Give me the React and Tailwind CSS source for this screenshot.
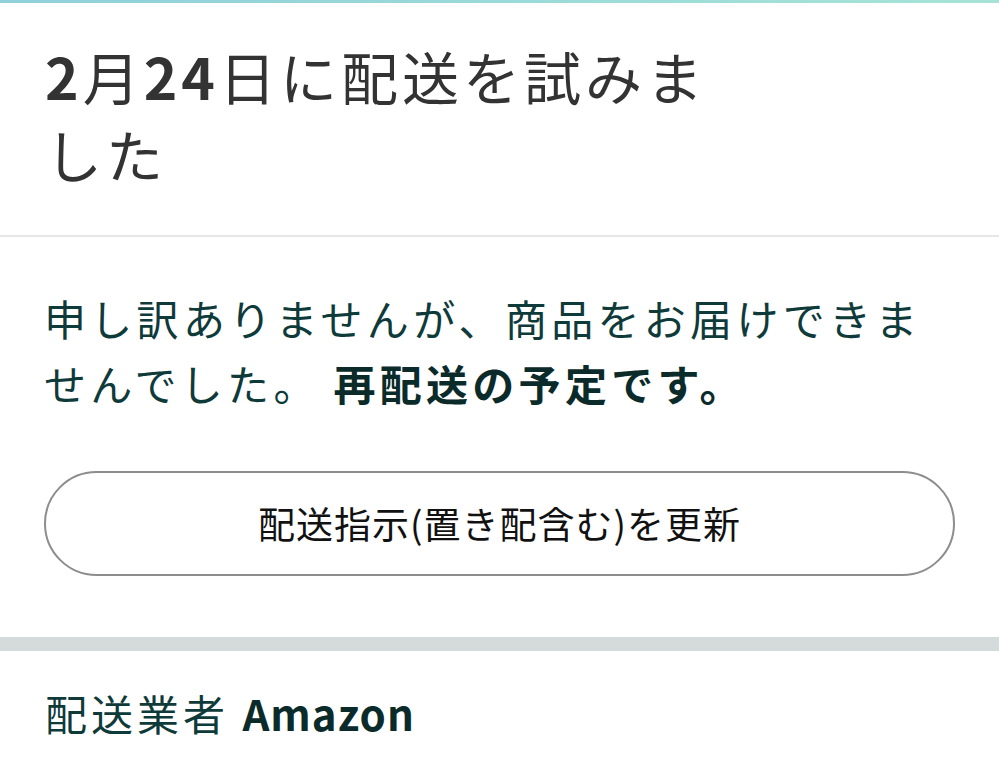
import React from 'react'

const JP = { fontFamily: '"Noto Sans CJK JP", "Noto Sans", sans-serif' }

const App = () => {
  return (
    <div className="w-[999px] h-[764px] overflow-hidden bg-white" style={JP}>
      <div className="h-[3px] bg-gradient-to-r from-[#8fd0da] to-[#a6e3d6]" />

      {/* heading */}
      <div className="h-[234px] flex border-b-2 border-[#e7e7e7]">
        <h1 className="pl-[45px] pt-[33px] text-[57px] leading-[78px] tracking-[4px] text-[#333333] font-normal whitespace-nowrap">
          <span className="font-bold">2</span>月<span className="font-bold">24</span>日に配送を試みま
          <br />
          した
        </h1>
      </div>

      {/* message */}
      <div className="px-[44px] pt-[48px]">
        <p className="text-[42px] leading-[65px] tracking-[4.3px] text-[#0f3a3a] whitespace-nowrap">
          申し訳ありませんが、商品をお届けできま
          <br />
          せんでした。 <span className="font-bold text-[#0b2b2b]">再配送の予定です。</span>
        </p>

        <button className="mt-[56px] w-[911px] h-[105px] rounded-full border-2 border-[#8d8d8d] flex items-center justify-center text-[37px] text-[#111111] tracking-[1px]">
          配送指示(置き配含む)を更新
        </button>
      </div>

      <div className="mt-[61px] h-[14px] bg-[#d5dbdb]" />

      {/* carrier */}
      <div className="px-[45px] pt-[32px]">
        <p className="text-[42px] leading-[60px] text-[#0f3a3a] tracking-[4px]">
          配送業者 <span className="font-bold text-[#0b2b2b] tracking-[1px]">Amazon</span>
        </p>
      </div>
    </div>
  )
}

export default App
